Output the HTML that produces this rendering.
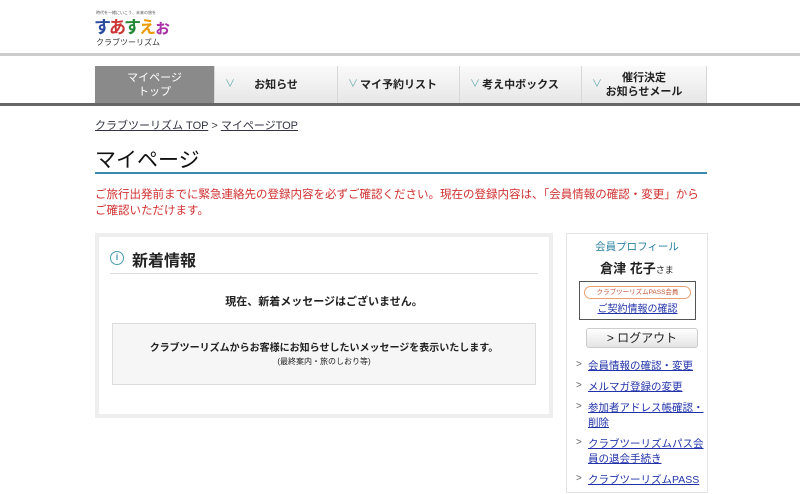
<!DOCTYPE html>
<html><head><meta charset="utf-8"><style>
*{margin:0;padding:0;box-sizing:border-box}
body{width:800px;height:480px;overflow:hidden;background:#fff;font-family:"Liberation Sans","Noto Sans CJK JP",sans-serif;color:#222;position:relative}
.a{position:absolute}
.nav div{position:absolute;top:0;height:38px;background:linear-gradient(#fafafa,#e6e6e6);border-right:1px solid #d8d8d8;font-size:11px;font-weight:bold;text-align:center;display:flex;align-items:center;justify-content:center;line-height:14px}
.nav div span.v{position:absolute;left:10px;color:#6aa;font-weight:normal;font-size:10px}
a{color:#2233aa}
.side a{display:block;font-size:10.5px;line-height:15px;color:#2233aa;text-decoration:underline}
.li{position:relative;padding-left:14px;margin-bottom:6px}
.li:before{content:">";position:absolute;left:2px;top:0;color:#666;font-size:10px}
</style></head><body>
<div class="a" style="left:96px;top:10px;font-size:4px;color:#555">時代を一緒にいこう、未来の旅を</div>
<div class="a" style="left:94px;top:13px;font-size:17px;font-weight:bold;letter-spacing:-2px"><span style="color:#2a4aa0">す</span><span style="color:#c33">あ</span><span style="color:#283">す</span><span style="color:#e90">え</span><span style="color:#a3a">ぉ</span></div>
<div class="a" style="left:96px;top:37px;font-size:8px;color:#333">クラブツーリズム</div>
<div class="a" style="left:0;top:53px;width:800px;height:3px;background:#ccc"></div>
<div class="nav a" style="left:95px;top:66px;width:612px;height:38px">
<div style="left:0;width:120px;background:#8a8a8a;color:#fff;font-weight:normal">マイページ<br>トップ</div>
<div style="left:120px;width:123px"><span class="v">∨</span>お知らせ</div>
<div style="left:243px;width:122px"><span class="v">∨</span>マイ予約リスト</div>
<div style="left:365px;width:122px"><span class="v">∨</span>考え中ボックス</div>
<div style="left:487px;width:125px"><span class="v">∨</span>催行決定<br>お知らせメール</div>
</div>
<div class="a" style="left:0;top:103px;width:800px;height:3px;background:#666"></div>
<div class="a" style="left:95px;top:117px;font-size:11px;color:#444"><a style="color:#334;text-decoration:underline">クラブツーリズム TOP</a> &gt; <a style="color:#334;text-decoration:underline">マイページTOP</a></div>
<div class="a" style="left:95px;top:144px;font-size:21px;color:#111">マイページ</div>
<div class="a" style="left:95px;top:172px;width:612px;height:2px;background:#3a8ab0"></div>
<div class="a" style="left:95px;top:187px;width:615px;font-size:11.5px;line-height:16px;color:#d03030">ご旅行出発前までに緊急連絡先の登録内容を必ずご確認ください。現在の登録内容は、「会員情報の確認・変更」からご確認いただけます。</div>
<div class="a" style="left:95px;top:233px;width:458px;height:185px;border:4px solid #eee;background:#fff"></div>
<div class="a" style="left:110px;top:251px;width:14px;height:14px;border:1.5px solid #4a9ab0;border-radius:50%;color:#4a9ab0;font-size:9px;text-align:center;line-height:11px;font-weight:bold">i</div>
<div class="a" style="left:132px;top:247px;font-size:16px;font-weight:bold">新着情報</div>
<div class="a" style="left:110px;top:273px;width:428px;height:1px;background:#ddd"></div>
<div class="a" style="left:95px;top:293px;width:458px;text-align:center;font-size:11px;font-weight:bold">現在、新着メッセージはございません。</div>
<div class="a" style="left:112px;top:323px;width:424px;height:62px;background:#f6f6f6;border:1px solid #ddd;text-align:center;padding-top:18px;font-size:10px;font-weight:bold;line-height:13px">クラブツーリズムからお客様にお知らせしたいメッセージを表示いたします。<br><span style="font-weight:normal;font-size:8px">(最終案内・旅のしおり等)</span></div>
<div class="a" style="left:566px;top:233px;width:142px;height:260px;border:1px solid #e4e4e4"></div>
<div class="a side" style="left:566px;top:239px;width:142px">
<div style="text-align:center;font-size:10.5px;color:#2a80a0">会員プロフィール</div>
<div style="text-align:center;font-size:13px;font-weight:bold;margin-top:4px">倉津 花子<span style="font-size:9px;font-weight:normal">さま</span></div>
<div style="margin:4px 12px 0 13px;border:1px solid #555;height:39px;padding-top:4px;text-align:center">
<div style="margin:0 4px;border:1.5px solid #e8a070;border-radius:8px;font-size:6.5px;color:#c05030;height:13px;line-height:11px">クラブツーリズムPASS会員</div>
<a style="font-size:10px;margin-top:3px">ご契約情報の確認</a></div>
<div style="margin:8px 10px 0 20px;height:20px;border:1px solid #ccc;border-radius:3px;background:linear-gradient(#fff,#e4e4e4);font-size:12px;text-align:center;line-height:18px">&gt; ログアウト</div>
<div style="margin:11px 0 0 8px">
<div class="li"><a>会員情報の確認・変更</a></div>
<div class="li"><a>メルマガ登録の変更</a></div>
<div class="li"><a>参加者アドレス帳確認・削除</a></div>
<div class="li"><a>クラブツーリズムパス会員の退会手続き</a></div>
<div class="li"><a>クラブツーリズムPASS</a></div>
</div></div>
</body></html>
